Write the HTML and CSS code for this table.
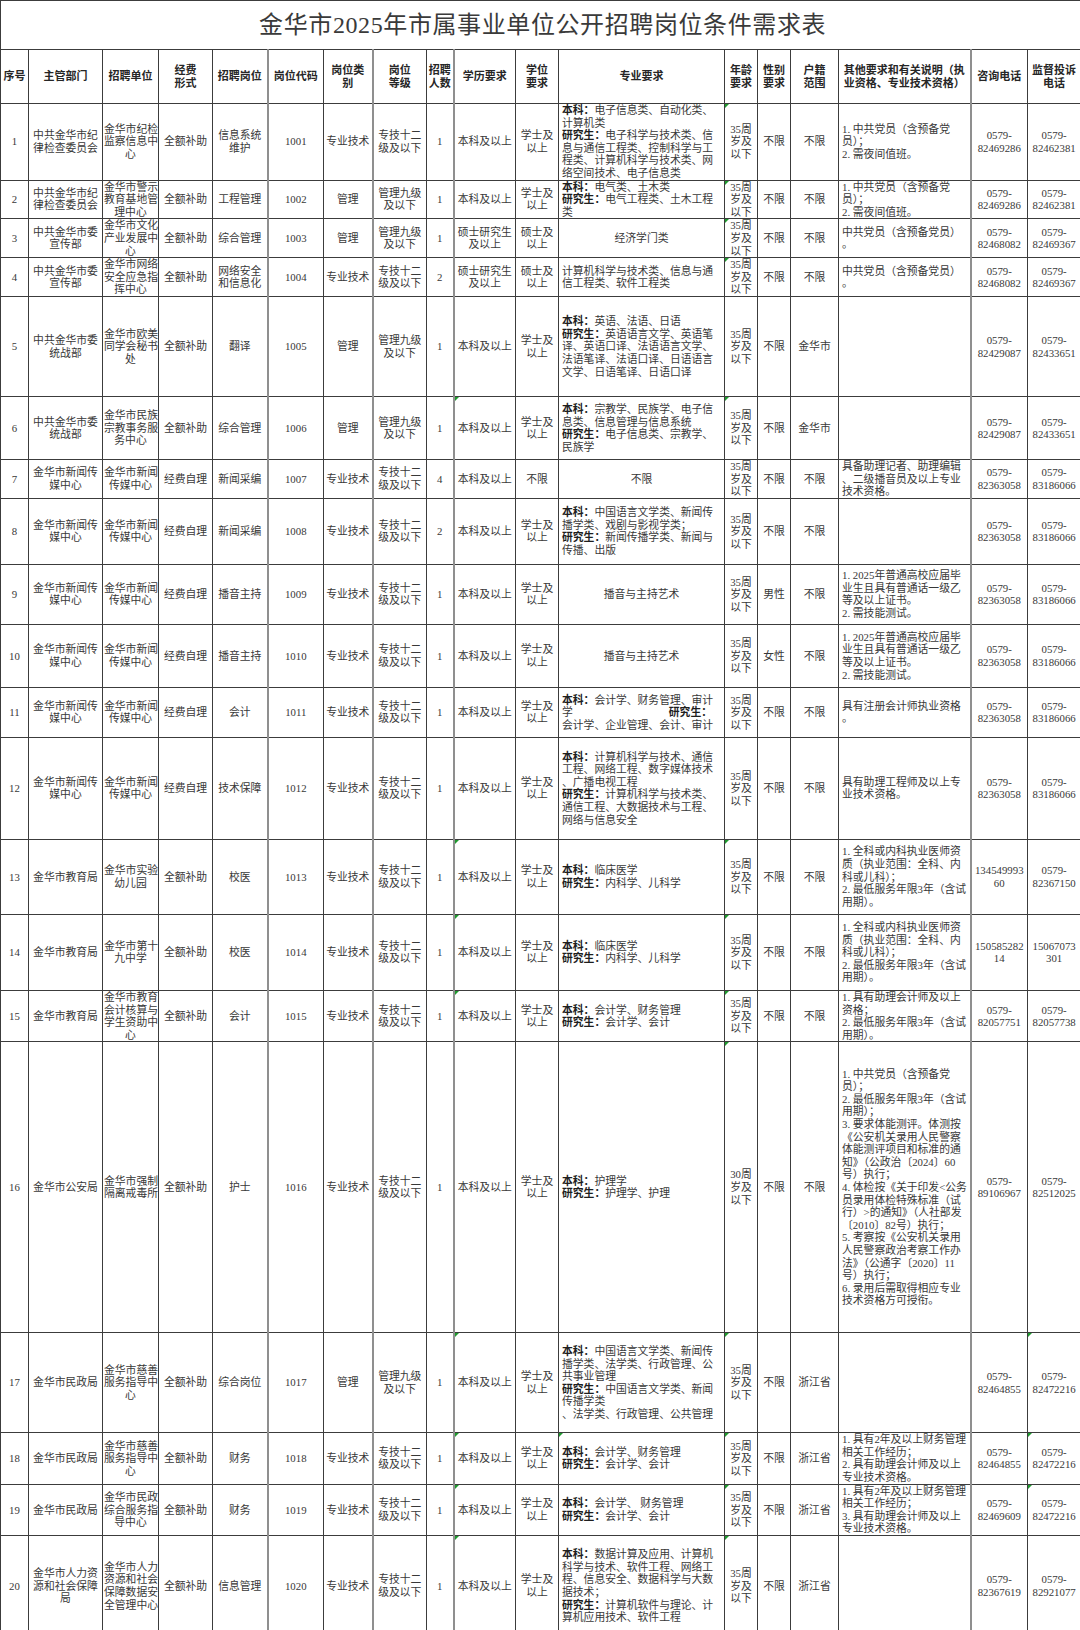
FILE: index.html
```html
<!DOCTYPE html>
<html lang="zh-CN">
<head>
<meta charset="utf-8">
<title>金华市2025年市属事业单位公开招聘岗位条件需求表</title>
<link rel="stylesheet" href="styles.css">
</head>
<body>
<table class="sheet">
<colgroup>
<col class="c1"><col class="c2"><col class="c3"><col class="c4"><col class="c5"><col class="c6"><col class="c7"><col class="c8"><col class="c9"><col class="c10"><col class="c11"><col class="c12"><col class="c13"><col class="c14"><col class="c15"><col class="c16"><col class="c17"><col class="c18">
</colgroup>
<tr class="h49"><td class="title" colspan="18">金华市2025年市属事业单位公开招聘岗位条件需求表</td></tr>
<tr class="h54 head">
<th>序号</th><th>主管部门</th><th>招聘单位</th><th>经费<br>形式</th><th>招聘岗位</th><th>岗位代码</th><th>岗位类<br>别</th><th>岗位<br>等级</th><th>招聘<br>人数</th><th>学历要求</th><th>学位<br>要求</th><th>专业要求</th><th>年龄<br>要求</th><th>性别<br>要求</th><th>户籍<br>范围</th><th>其他要求和有关说明（执<br>业资格、专业技术资格）</th><th>咨询电话</th><th>监督投诉<br>电话</th>
</tr>
<tr class="h75">
<td>1</td><td>中共金华市纪<br>律检查委员会</td><td>金华市纪检<br>监察信息中<br>心</td><td>全额补助</td><td>信息系统<br>维护</td><td>1001</td><td>专业技术</td><td>专技十二<br>级及以下</td><td>1</td><td>本科及以上</td><td>学士及<br>以上</td>
<td class="l"><b>本科：</b>电子信息类、自动化类、<br>计算机类<br><b>研究生：</b>电子科学与技术类、信<br>息与通信工程类、控制科学与工<br>程类、计算机科学与技术类、网<br>络空间技术、电子信息类</td>
<td class="g">35周<br>岁及<br>以下</td><td>不限</td><td>不限</td><td class="l">1. 中共党员（含预备党<br>员）；<br>2. 需夜间值班。</td><td>0579-<br>82469286</td><td>0579-<br>82462381</td>
</tr>
<tr class="h38">
<td>2</td><td>中共金华市纪<br>律检查委员会</td><td>金华市警示<br>教育基地管<br>理中心</td><td>全额补助</td><td>工程管理</td><td>1002</td><td>管理</td><td>管理九级<br>及以下</td><td>1</td><td>本科及以上</td><td>学士及<br>以上</td>
<td class="l"><b>本科：</b>电气类、土木类<br><b>研究生：</b>电气工程类、土木工程<br>类</td>
<td class="g">35周<br>岁及<br>以下</td><td>不限</td><td>不限</td><td class="l">1. 中共党员（含预备党<br>员）；<br>2. 需夜间值班。</td><td>0579-<br>82469286</td><td>0579-<br>82462381</td>
</tr>
<tr class="h38">
<td>3</td><td>中共金华市委<br>宣传部</td><td>金华市文化<br>产业发展中<br>心</td><td>全额补助</td><td>综合管理</td><td>1003</td><td>管理</td><td>管理九级<br>及以下</td><td>1</td><td>硕士研究生<br>及以上</td><td>硕士及<br>以上</td>
<td>经济学门类</td>
<td class="g">35周<br>岁及<br>以下</td><td>不限</td><td>不限</td><td class="l">中共党员（含预备党员）<br>。</td><td>0579-<br>82468082</td><td>0579-<br>82469367</td>
</tr>
<tr class="h39">
<td>4</td><td>中共金华市委<br>宣传部</td><td>金华市网络<br>安全应急指<br>挥中心</td><td>全额补助</td><td>网络安全<br>和信息化</td><td>1004</td><td>专业技术</td><td>专技十二<br>级及以下</td><td>2</td><td>硕士研究生<br>及以上</td><td>硕士及<br>以上</td>
<td class="l">计算机科学与技术类、信息与通<br>信工程类、软件工程类</td>
<td class="g">35周<br>岁及<br>以下</td><td>不限</td><td>不限</td><td class="l">中共党员（含预备党员）<br>。</td><td>0579-<br>82468082</td><td>0579-<br>82469367</td>
</tr>
<tr class="h100">
<td>5</td><td>中共金华市委<br>统战部</td><td>金华市欧美<br>同学会秘书<br>处</td><td>全额补助</td><td>翻译</td><td>1005</td><td>管理</td><td>管理九级<br>及以下</td><td>1</td><td>本科及以上</td><td>学士及<br>以上</td>
<td class="l"><b>本科：</b>英语、法语、日语<br><b>研究生：</b>英语语言文学、英语笔<br>译、英语口译、法语语言文学、<br>法语笔译、法语口译、日语语言<br>文学、日语笔译、日语口译</td>
<td>35周<br>岁及<br>以下</td><td>不限</td><td>金华市</td><td class="l"></td><td>0579-<br>82429087</td><td>0579-<br>82433651</td>
</tr>
<tr class="h63">
<td>6</td><td>中共金华市委<br>统战部</td><td>金华市民族<br>宗教事务服<br>务中心</td><td>全额补助</td><td>综合管理</td><td>1006</td><td>管理</td><td>管理九级<br>及以下</td><td>1</td><td class="g">本科及以上</td><td>学士及<br>以上</td>
<td class="l"><b>本科：</b>宗教学、民族学、电子信<br>息类、信息管理与信息系统<br><b>研究生：</b>电子信息类、宗教学、<br>民族学</td>
<td class="g">35周<br>岁及<br>以下</td><td>不限</td><td>金华市</td><td class="l"></td><td>0579-<br>82429087</td><td>0579-<br>82433651</td>
</tr>
<tr class="h38">
<td>7</td><td>金华市新闻传<br>媒中心</td><td>金华市新闻<br>传媒中心</td><td>经费自理</td><td>新闻采编</td><td>1007</td><td>专业技术</td><td>专技十二<br>级及以下</td><td>4</td><td>本科及以上</td><td>不限</td>
<td>不限</td>
<td>35周<br>岁及<br>以下</td><td>不限</td><td>不限</td><td class="l">具备助理记者、助理编辑<br>、二级播音员及以上专业<br>技术资格。</td><td>0579-<br>82363058</td><td>0579-<br>83186066</td>
</tr>
<tr class="h66">
<td>8</td><td>金华市新闻传<br>媒中心</td><td>金华市新闻<br>传媒中心</td><td>经费自理</td><td>新闻采编</td><td>1008</td><td>专业技术</td><td>专技十二<br>级及以下</td><td>2</td><td>本科及以上</td><td>学士及<br>以上</td>
<td class="l"><b>本科：</b>中国语言文学类、新闻传<br>播学类、戏剧与影视学类；<br><b>研究生：</b>新闻传播学类、新闻与<br>传播、出版</td>
<td>35周<br>岁及<br>以下</td><td>不限</td><td>不限</td><td class="l"></td><td>0579-<br>82363058</td><td>0579-<br>83186066</td>
</tr>
<tr class="h60">
<td>9</td><td>金华市新闻传<br>媒中心</td><td>金华市新闻<br>传媒中心</td><td>经费自理</td><td>播音主持</td><td>1009</td><td>专业技术</td><td>专技十二<br>级及以下</td><td>1</td><td>本科及以上</td><td>学士及<br>以上</td>
<td>播音与主持艺术</td>
<td>35周<br>岁及<br>以下</td><td>男性</td><td>不限</td><td class="l">1. 2025年普通高校应届毕<br>业生且具有普通话一级乙<br>等及以上证书。<br>2. 需技能测试。</td><td>0579-<br>82363058</td><td>0579-<br>83186066</td>
</tr>
<tr class="h63">
<td>10</td><td>金华市新闻传<br>媒中心</td><td>金华市新闻<br>传媒中心</td><td>经费自理</td><td>播音主持</td><td>1010</td><td>专业技术</td><td>专技十二<br>级及以下</td><td>1</td><td>本科及以上</td><td>学士及<br>以上</td>
<td>播音与主持艺术</td>
<td>35周<br>岁及<br>以下</td><td>女性</td><td>不限</td><td class="l">1. 2025年普通高校应届毕<br>业生且具有普通话一级乙<br>等及以上证书。<br>2. 需技能测试。</td><td>0579-<br>82363058</td><td>0579-<br>83186066</td>
</tr>
<tr class="h50">
<td>11</td><td>金华市新闻传<br>媒中心</td><td>金华市新闻<br>传媒中心</td><td>经费自理</td><td>会计</td><td>1011</td><td>专业技术</td><td>专技十二<br>级及以下</td><td>1</td><td>本科及以上</td><td>学士及<br>以上</td>
<td class="l"><b>本科：</b>会计学、财务管理、审计<br>学<b class="gap">研究生：</b><br>会计学、企业管理、会计、审计</td>
<td>35周<br>岁及<br>以下</td><td>不限</td><td>不限</td><td class="l">具有注册会计师执业资格<br>。</td><td>0579-<br>82363058</td><td>0579-<br>83186066</td>
</tr>
<tr class="h102">
<td>12</td><td>金华市新闻传<br>媒中心</td><td>金华市新闻<br>传媒中心</td><td>经费自理</td><td>技术保障</td><td>1012</td><td>专业技术</td><td>专技十二<br>级及以下</td><td>1</td><td>本科及以上</td><td>学士及<br>以上</td>
<td class="l"><b>本科：</b>计算机科学与技术、通信<br>工程、网络工程、数字媒体技术<br>、广播电视工程<br><b>研究生：</b>计算机科学与技术类、<br>通信工程、大数据技术与工程、<br>网络与信息安全</td>
<td>35周<br>岁及<br>以下</td><td>不限</td><td>不限</td><td class="l">具有助理工程师及以上专<br>业技术资格。</td><td>0579-<br>82363058</td><td>0579-<br>83186066</td>
</tr>
<tr class="h75">
<td>13</td><td>金华市教育局</td><td>金华市实验<br>幼儿园</td><td>全额补助</td><td>校医</td><td>1013</td><td>专业技术</td><td>专技十二<br>级及以下</td><td>1</td><td class="g">本科及以上</td><td>学士及<br>以上</td>
<td class="l"><b>本科：</b>临床医学<br><b>研究生：</b>内科学、儿科学</td>
<td class="g">35周<br>岁及<br>以下</td><td>不限</td><td>不限</td><td class="l">1. 全科或内科执业医师资<br>质（执业范围：全科、内<br>科或儿科）；<br>2. 最低服务年限3年（含试<br>用期）。</td><td>134549993<br>60</td><td>0579-<br>82367150</td>
</tr>
<tr class="h76">
<td>14</td><td>金华市教育局</td><td>金华市第十<br>九中学</td><td>全额补助</td><td>校医</td><td>1014</td><td>专业技术</td><td>专技十二<br>级及以下</td><td>1</td><td class="g">本科及以上</td><td>学士及<br>以上</td>
<td class="l"><b>本科：</b>临床医学<br><b>研究生：</b>内科学、儿科学</td>
<td class="g">35周<br>岁及<br>以下</td><td>不限</td><td>不限</td><td class="l">1. 全科或内科执业医师资<br>质（执业范围：全科、内<br>科或儿科）；<br>2. 最低服务年限3年（含试<br>用期）。</td><td>150585282<br>14</td><td>15067073<br>301</td>
</tr>
<tr class="h50">
<td>15</td><td>金华市教育局</td><td>金华市教育<br>会计核算与<br>学生资助中<br>心</td><td>全额补助</td><td>会计</td><td>1015</td><td>专业技术</td><td>专技十二<br>级及以下</td><td>1</td><td class="g">本科及以上</td><td>学士及<br>以上</td>
<td class="l"><b>本科：</b>会计学、财务管理<br><b>研究生：</b>会计学、会计</td>
<td class="g">35周<br>岁及<br>以下</td><td>不限</td><td>不限</td><td class="l">1. 具有助理会计师及以上<br>资格；<br>2. 最低服务年限3年（含试<br>用期）。</td><td>0579-<br>82057751</td><td>0579-<br>82057738</td>
</tr>
<tr class="h291">
<td>16</td><td>金华市公安局</td><td>金华市强制<br>隔离戒毒所</td><td>全额补助</td><td>护士</td><td>1016</td><td>专业技术</td><td>专技十二<br>级及以下</td><td>1</td><td>本科及以上</td><td>学士及<br>以上</td>
<td class="l"><b>本科：</b>护理学<br><b>研究生：</b>护理学、护理</td>
<td class="g">30周<br>岁及<br>以下</td><td>不限</td><td>不限</td>
<td class="l">1. 中共党员（含预备党<br>员）；<br>2. 最低服务年限3年（含试<br>用期）；<br>3. 要求体能测评。体测按<br>《公安机关录用人民警察<br>体能测评项目和标准的通<br>知》（公政治〔2024〕60<br>号）执行；<br>4. 体检按《关于印发&lt;公务<br>员录用体检特殊标准（试<br>行）&gt;的通知》（人社部发<br>〔2010〕82号）执行；<br>5. 考察按《公安机关录用<br>人民警察政治考察工作办<br>法》（公通字〔2020〕11<br>号）执行；<br>6. 录用后需取得相应专业<br>技术资格方可授衔。</td>
<td>0579-<br>89106967</td><td>0579-<br>82512025</td>
</tr>
<tr class="h100">
<td>17</td><td>金华市民政局</td><td>金华市慈善<br>服务指导中<br>心</td><td>全额补助</td><td>综合岗位</td><td>1017</td><td>管理</td><td>管理九级<br>及以下</td><td>1</td><td class="g">本科及以上</td><td>学士及<br>以上</td>
<td class="l"><b>本科：</b>中国语言文学类、新闻传<br>播学类、法学类、行政管理、公<br>共事业管理<br><b>研究生：</b>中国语言文学类、新闻<br>传播学类<br>、法学类、行政管理、公共管理</td>
<td class="g">35周<br>岁及<br>以下</td><td>不限</td><td>浙江省</td><td class="l"></td><td>0579-<br>82464855</td><td class="g">0579-<br>82472216</td>
</tr>
<tr class="h51">
<td>18</td><td>金华市民政局</td><td>金华市慈善<br>服务指导中<br>心</td><td>全额补助</td><td>财务</td><td>1018</td><td>专业技术</td><td>专技十二<br>级及以下</td><td>1</td><td class="g">本科及以上</td><td>学士及<br>以上</td>
<td class="l g"><b>本科：</b>会计学、财务管理<br><b>研究生：</b>会计学、会计</td>
<td class="g">35周<br>岁及<br>以下</td><td>不限</td><td>浙江省</td><td class="l">1. 具有2年及以上财务管理<br>相关工作经历；<br>2. 具有助理会计师及以上<br>专业技术资格。</td><td>0579-<br>82464855</td><td class="g">0579-<br>82472216</td>
</tr>
<tr class="h50">
<td>19</td><td>金华市民政局</td><td>金华市民政<br>综合服务指<br>导中心</td><td>全额补助</td><td>财务</td><td>1019</td><td>专业技术</td><td>专技十二<br>级及以下</td><td>1</td><td class="g">本科及以上</td><td>学士及<br>以上</td>
<td class="l"><b>本科：</b>会计学、 财务管理<br><b>研究生：</b>会计学、会计</td>
<td class="g">35周<br>岁及<br>以下</td><td>不限</td><td>浙江省</td><td class="l">1. 具有2年及以上财务管理<br>相关工作经历；<br>3. 具有助理会计师及以上<br>专业技术资格。</td><td>0579-<br>82469609</td><td class="g">0579-<br>82472216</td>
</tr>
<tr class="h101">
<td>20</td><td>金华市人力资<br>源和社会保障<br>局</td><td>金华市人力<br>资源和社会<br>保障数据安<br>全管理中心</td><td>全额补助</td><td>信息管理</td><td>1020</td><td>专业技术</td><td>专技十二<br>级及以下</td><td>1</td><td class="g">本科及以上</td><td>学士及<br>以上</td>
<td class="l"><b>本科：</b>数据计算及应用、计算机<br>科学与技术、软件工程、网络工<br>程、信息安全、数据科学与大数<br>据技术；<br><b>研究生：</b>计算机软件与理论、计<br>算机应用技术、软件工程</td>
<td class="g">35周<br>岁及<br>以下</td><td>不限</td><td>浙江省</td><td class="l"></td><td>0579-<br>82367619</td><td>0579-<br>82921077</td>
</tr>
</table>
</body>
</html>
```

FILE: styles.css
```css
* { box-sizing: border-box; }
html, body { margin: 0; padding: 0; background: #ffffff; }
body {
  font-family: "Liberation Serif", "Noto Sans CJK SC", serif;
  color: #383838;
}
.sheet {
  width: 1080px;
  border-collapse: collapse;
  table-layout: fixed;
}
.c1 { width: 28px; }
.c2 { width: 74px; }
.c3 { width: 56px; }
.c4 { width: 54px; }
.c5 { width: 55px; }
.c6 { width: 56px; }
.c7 { width: 49px; }
.c8 { width: 54px; }
.c9 { width: 27px; }
.c10 { width: 62px; }
.c11 { width: 43px; }
.c12 { width: 166px; }
.c13 { width: 33px; }
.c14 { width: 33px; }
.c15 { width: 48px; }
.c16 { width: 132px; }
.c17 { width: 57px; }
.c18 { width: 53px; }

.sheet td, .sheet th {
  border: 1px solid #3c3c3c;
  padding: 0 1px;
  font-size: 10.8px;
  line-height: 12.6px;
  text-align: center;
  vertical-align: middle;
  white-space: nowrap;
  overflow: visible;
  font-weight: 400;
}
/* lighter double-looking grid lines seen in the sheet */
.sheet tr:not(.h49) > :nth-child(5),
.sheet tr:not(.h49) > :nth-child(7),
.sheet tr:not(.h49) > :nth-child(9),
.sheet tr:not(.h49) > :nth-child(16) {
  border-right: 2px solid #8f8f8f;
}
.sheet .head th {
  font-weight: 700;
  font-size: 11px;
  color: #262626;
}
.sheet td.title {
  font-family: "Liberation Serif", "Noto Sans CJK SC", serif;
  font-size: 24px;
  line-height: 26px;
  color: #3a3a3a;
  padding: 0 0 0 4px;
  letter-spacing: 0.6px;
}
.sheet td.l { text-align: left; padding-left: 3px; }
.sheet td b { font-weight: 700; color: #1e1e1e; }
.gap { display: inline-block; margin-left: 96px; }

.sheet td.g { position: relative; }
.sheet td.g::before {
  content: "";
  position: absolute;
  left: 0;
  top: 0;
  width: 0;
  height: 0;
  border-top: 4px solid #1f9a2f;
  border-right: 4px solid transparent;
}

.h49 { height: 49px; }
.h54 { height: 54px; }
.h75 { height: 75px; }
.h38 { height: 38px; }
.h39 { height: 39px; }
.h100 { height: 100px; }
.h63 { height: 63px; }
.h66 { height: 66px; }
.h60 { height: 60px; }
.h50 { height: 50px; }
.h102 { height: 102px; }
.h76 { height: 76px; }
.h291 { height: 291px; }
.h51 { height: 51px; }
.h101 { height: 101px; }
```
